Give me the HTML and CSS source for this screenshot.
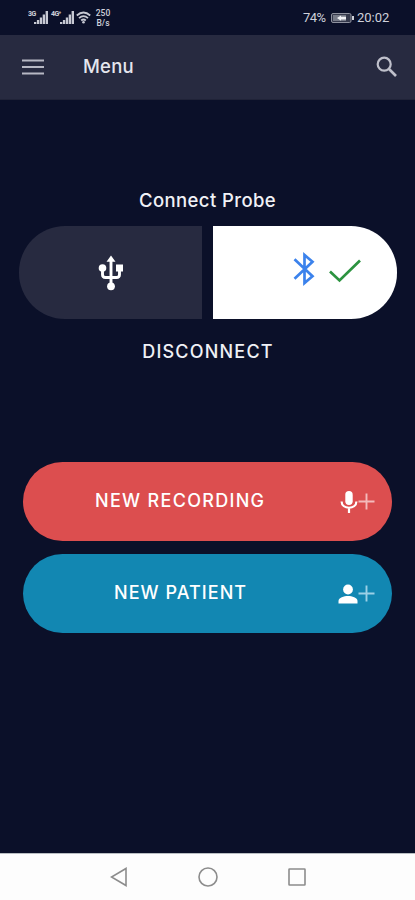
FILE: index.html
```html
<!DOCTYPE html>
<html lang="en">
<head>
<meta charset="utf-8">
<title>Menu</title>
<link rel="stylesheet" href="styles.css">
</head>
<body>
<div class="phone">
  <div class="status">
    <div class="status-left">
      <span class="net net-3g">3G</span>
      <svg class="signal" width="14" height="13" viewBox="0 0 14 13"><path d="M0 13v-2h2.300v2zM2.900 13V9h2.300v4zM5.800 13V6.500h2.300V13zM8.700 13V3.500H11V13zM11.600 13V0H14v13z"/></svg>
      <span class="net net-4g">4G⁺</span>
      <svg class="signal" width="14" height="13" viewBox="0 0 14 13"><path d="M0 13v-2h2.300v2zM2.900 13V9h2.300v4zM5.800 13V6.500h2.300V13zM8.700 13V3.500H11V13zM11.600 13V0H14v13z"/></svg>
      <svg class="wifi" width="15" height="13" viewBox="0 0 15 13"><path d="M.8 4.500Q7.500-1.500 14.200 4.500M3 7.200Q7.500 3 12 7.200M5.200 9.500Q7.500 7.500 9.800 9.500"/><circle cx="7.500" cy="11.300" r="1.300"/></svg>
      <span class="rate"><span>250</span><span>B/s</span></span>
    </div>
    <div class="status-right">
      <span class="percent">74%</span>
      <svg class="battery" width="23" height="10" viewBox="0 0 23 10"><rect x=".5" y=".5" width="19.500" height="9" rx="1.500" fill="#34384b" stroke="#8f929f"/><path d="M2 2h13v6H2z" fill="#777b88"/><path d="M6 5l4-2.500v1.300h5v2.600h-5v1.300z" fill="#f0f1f4"/><path d="M21 3h2v4h-2z" fill="#cfd1d9"/></svg>
      <span class="clock">20:02</span>
    </div>
  </div>
  <header class="appbar">
    <svg width="22" height="16" viewBox="0 0 22 16"><path d="M0 1.500h22M0 8h22M0 14.500h22" stroke="#b7b8c4" stroke-width="2.200"/></svg>
    <h1>Menu</h1>
    <svg class="search" width="22" height="22" viewBox="0 0 22 22" fill="none" stroke="#bfc0cb"><circle cx="8.200" cy="8.200" r="6.500" stroke-width="2.200"/><path d="M13 13l7 7" stroke-width="2.600"/></svg>
  </header>
  <main>
    <h2>Connect Probe</h2>
    <div class="probe">
      <div class="tile usb">
        <svg width="26" height="36" viewBox="0 0 26 36"><path d="M13 6v25M4.500 13v6.500q0 3 3 3h11q3 0 3-3V13" fill="none" stroke="#fff" stroke-width="2.900"/><path d="M13 .5l4.500 6.300h-9zM18 9.500h7v7h-7z" fill="#fff"/><circle cx="4.500" cy="13" r="3.800" fill="#fff"/><circle cx="13" cy="31.300" r="3.900" fill="#fff"/></svg>
      </div>
      <div class="tile bluetooth">
        <svg width="22" height="34" viewBox="0 0 22 34" fill="none" stroke="#3b82ec" stroke-width="2.700"><path d="M1.500 7.200l18 17L11.500 31V3l8 6.800-18 17"/></svg>
        <svg class="check" width="32" height="24" viewBox="0 0 32 24" fill="none" stroke="#2c9340" stroke-width="2.700"><path d="M1 12.500l9.500 9L31 1.500"/></svg>
      </div>
    </div>
    <div class="disconnect">DISCONNECT</div>
    <div class="action recording">
      <span class="label">NEW RECORDING</span>
      <span class="icons">
        <svg width="18" height="24" viewBox="0 0 18 24"><rect x="5.300" y="1" width="7.400" height="14" rx="3.700" fill="#fff"/><path d="M1.600 11.500c0 8.300 14.800 8.300 14.800 0M9 17.500V23" fill="none" stroke="#fff" stroke-width="2.200"/></svg>
        <svg width="17" height="17" viewBox="0 0 17 17"><path d="M8.500.5v16M.5 8.500h16" stroke="#f3babb" stroke-width="1.900"/></svg>
      </span>
    </div>
    <div class="action patient">
      <span class="label">NEW PATIENT</span>
      <span class="icons">
        <svg width="20" height="24" viewBox="0 0 20 24"><circle cx="10" cy="7.500" r="4.900" fill="#fff"/><path d="M.5 21.500V19c0-3.300 5.500-5 9.500-5s9.500 1.700 9.500 5v2.500z" fill="#fff"/></svg>
        <svg width="17" height="17" viewBox="0 0 17 17"><path d="M8.500.5v16M.5 8.500h16" stroke="#9bd0e6" stroke-width="1.900"/></svg>
      </span>
    </div>
  </main>
  <nav>
    <svg width="18" height="20" viewBox="0 0 18 20"><path d="M16 1.500v17L1.500 10z"/></svg>
    <svg width="20" height="20" viewBox="0 0 20 20"><circle cx="10" cy="10" r="9"/></svg>
    <svg width="18" height="18" viewBox="0 0 18 18"><rect x="1" y="1" width="16" height="16" rx=".5"/></svg>
  </nav>
</div>
</body>
</html>
```
FILE: styles.css
```css
* { box-sizing: border-box; }
body { margin: 0; background: #0b1029; font-family: Inter, "Liberation Sans", sans-serif; }
svg { display: block; flex: none; }
h1, h2 { margin: 0; font-weight: 500; }
.phone { width: 415px; height: 900px; display: flex; flex-direction: column; overflow: hidden; color: #f0f1f6; }
.status { height: 35px; display: flex; justify-content: space-between; padding: 0 25px 0 28px; font-family: Roboto, sans-serif; color: #cfd1db; }
.status-left { display: flex; align-items: flex-start; padding-top: 11px; }
.net { font-size: 7px; line-height: 7px; font-weight: 700; letter-spacing: -.6px; white-space: nowrap; }
.net-3g { width: 6px; }
.net-4g { width: 9px; margin-left: 3px; }
.signal { fill: #c7c9d3; }
.wifi { margin-left: 2px; fill: #c7c9d3; }
.wifi path { fill: none; stroke: #c7c9d3; stroke-width: 1.800; }
.rate { display: flex; flex-direction: column; align-items: center; width: 16px; margin: -3px 0 0 4px; font-size: 8.500px; line-height: 10px; font-weight: 500; }
.status-right { display: flex; align-items: center; font-size: 13px; }
.percent { width: 28px; letter-spacing: -.5px; }
.clock { width: 33px; margin-left: 3px; }
.appbar { height: 65px; display: flex; align-items: center; padding: 0 17px 0 22px; background: #272a40; border-bottom: 1px solid #202338; }
.appbar h1 { margin: -3px auto 0 39px; font-size: 18.500px; letter-spacing: .2px; color: #e5e6ee; }
main { flex: 1; display: flex; flex-direction: column; align-items: center; }
main h2 { margin-top: 88px; height: 24px; line-height: 25px; font-size: 18.500px; letter-spacing: .4px; white-space: nowrap; }
.probe { display: grid; grid-template-columns: 183px 184px; gap: 11px; height: 93px; margin: 14px 0 0 1px; }
.tile { display: flex; align-items: center; }
.usb { justify-content: center; background: #272a40; border-radius: 46px 0 0 46px; }
.bluetooth { padding-left: 80px; background: #fff; border-radius: 0 46px 46px 0; }
.bluetooth svg:first-child { margin-top: -8px; }
.check { margin: -4px 0 0 14px; }
.disconnect { height: 24px; line-height: 25px; margin: 20px 0 0 1px; font-size: 18px; letter-spacing: 1.200px; font-weight: 500; }
.action { width: 369px; height: 79px; border-radius: 40px; display: flex; align-items: center; justify-content: space-between; padding-right: 17px; font-size: 18px; font-weight: 500; color: #fff; }
.recording { margin-top: 99px; padding-left: 72px; background: #dc4e4f; }
.patient { margin-top: 13px; padding-left: 91px; background: #1287b2; }
.label { letter-spacing: 1.200px; margin-top: -3px; }
.recording .label { letter-spacing: 1.300px; }
.patient .label { letter-spacing: 1.050px; }
.icons { display: flex; align-items: center; }
nav { height: 47px; background: #fdfdfd; border-top: 1px solid #b9bec2; display: flex; align-items: center; justify-content: center; gap: 70px; }
nav svg { fill: none; stroke: #8c8c8c; stroke-width: 1.600; }
```
